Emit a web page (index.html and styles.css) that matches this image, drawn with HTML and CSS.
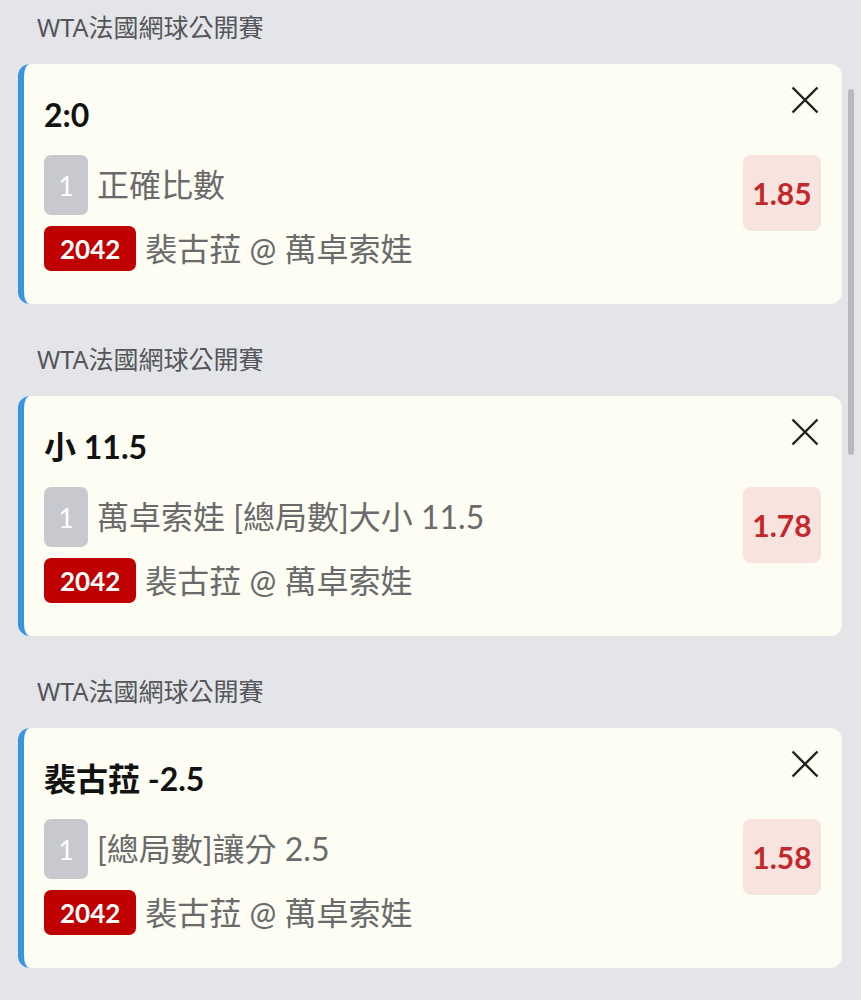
FILE: index.html
```html
<!DOCTYPE html>
<html lang="zh-Hant">
<head>
    <meta charset="UTF-8">
    <meta name="viewport" content="width=device-width, initial-scale=1.0">
    <title>投注單</title>
    <link rel="stylesheet" href="styles.css">
</head>
<body>
    <div class="slip-list">
        <div class="slip-group">
            <div class="league">WTA法國網球公開賽</div>
            <div class="bet-card">
                <div class="bet-main">
                    <div class="bet-title">2:0</div>
                    <div class="bet-row">
                        <span class="leg-tag">1</span>
                        <span class="bet-desc">正確比數</span>
                    </div>
                    <div class="bet-row match-row">
                        <span class="match-no">2042</span>
                        <span class="bet-desc">裴古菈 @ 萬卓索娃</span>
                    </div>
                </div>
                <div class="bet-side">
                    <button class="close-btn" aria-label="移除">
                        <svg viewBox="0 0 32 32" width="32" height="32"><path d="M3.5 3.5 L28.5 28.5 M28.5 3.5 L3.5 28.5" /></svg>
                    </button>
                    <div class="odds">1.85</div>
                </div>
            </div>
        </div>

        <div class="slip-group">
            <div class="league">WTA法國網球公開賽</div>
            <div class="bet-card">
                <div class="bet-main">
                    <div class="bet-title">小 11.5</div>
                    <div class="bet-row">
                        <span class="leg-tag">1</span>
                        <span class="bet-desc">萬卓索娃 [總局數]大小 11.5</span>
                    </div>
                    <div class="bet-row match-row">
                        <span class="match-no">2042</span>
                        <span class="bet-desc">裴古菈 @ 萬卓索娃</span>
                    </div>
                </div>
                <div class="bet-side">
                    <button class="close-btn" aria-label="移除">
                        <svg viewBox="0 0 32 32" width="32" height="32"><path d="M3.5 3.5 L28.5 28.5 M28.5 3.5 L3.5 28.5" /></svg>
                    </button>
                    <div class="odds">1.78</div>
                </div>
            </div>
        </div>

        <div class="slip-group">
            <div class="league">WTA法國網球公開賽</div>
            <div class="bet-card">
                <div class="bet-main">
                    <div class="bet-title">裴古菈 -2.5</div>
                    <div class="bet-row">
                        <span class="leg-tag">1</span>
                        <span class="bet-desc">[總局數]讓分 2.5</span>
                    </div>
                    <div class="bet-row match-row">
                        <span class="match-no">2042</span>
                        <span class="bet-desc">裴古菈 @ 萬卓索娃</span>
                    </div>
                </div>
                <div class="bet-side">
                    <button class="close-btn" aria-label="移除">
                        <svg viewBox="0 0 32 32" width="32" height="32"><path d="M3.5 3.5 L28.5 28.5 M28.5 3.5 L3.5 28.5" /></svg>
                    </button>
                    <div class="odds">1.58</div>
                </div>
            </div>
        </div>
    </div>
    <div class="scroll-thumb"></div>
</body>
</html>
```

FILE: styles.css
```css
body {
    margin: 0;
    background-color: #e4e5e9;
    font-family: Lato, "Noto Sans CJK TC", sans-serif;
    overflow: hidden;
}
.slip-list {
    padding: 11px 19px 0 18px;
}
.slip-group {
    margin-bottom: 39px;
}
.league {
    padding-left: 19px;
    font-family: "Noto Sans", "Noto Sans CJK TC", sans-serif;
    font-size: 25px;
    line-height: 32px;
    color: #555659;
    margin-bottom: 21px;
}
.bet-card {
    display: flex;
    background-color: #fdfdf4;
    border-left: 6px solid #3b95de;
    border-radius: 12px;
}
.bet-main {
    flex: 1;
    padding: 31px 0 33px 20px;
}
.bet-title {
    font-size: 32px;
    line-height: 40px;
    font-weight: 700;
    color: #121212;
    margin-bottom: 20px;
}
.bet-row {
    display: flex;
    align-items: center;
    gap: 9px;
    height: 60px;
}
.match-row {
    height: 45px;
    margin-top: 11px;
}
.leg-tag {
    width: 44px;
    height: 60px;
    border-radius: 7px;
    background-color: #c8c9cf;
    color: #fff;
    font-size: 27px;
    display: flex;
    align-items: center;
    justify-content: center;
}
.match-no {
    height: 45px;
    padding: 0 16px;
    border-radius: 7px;
    background-color: #c00000;
    color: #fff;
    font-size: 26px;
    font-weight: 700;
    display: flex;
    align-items: center;
}
.bet-desc {
    font-size: 32px;
    line-height: 40px;
    color: #6a6a6a;
}
.bet-side {
    display: flex;
    flex-direction: column;
    align-items: flex-end;
    padding: 20px 21px 0 0;
}
.close-btn {
    width: 32px;
    height: 32px;
    padding: 0;
    border: none;
    background: none;
}
.close-btn svg {
    display: block;
    fill: none;
    stroke: #1e1e1e;
    stroke-width: 2.4;
}
.odds {
    margin-top: 39px;
    width: 78px;
    height: 76px;
    border-radius: 8px;
    background-color: #f7e4de;
    color: #c3272b;
    font-size: 30px;
    font-weight: 700;
    display: flex;
    align-items: center;
    justify-content: center;
}
.scroll-thumb {
    position: absolute;
    left: 848px;
    top: 89px;
    width: 6px;
    height: 366px;
    border-radius: 3px;
    background-color: #b8b9bd;
}
```
